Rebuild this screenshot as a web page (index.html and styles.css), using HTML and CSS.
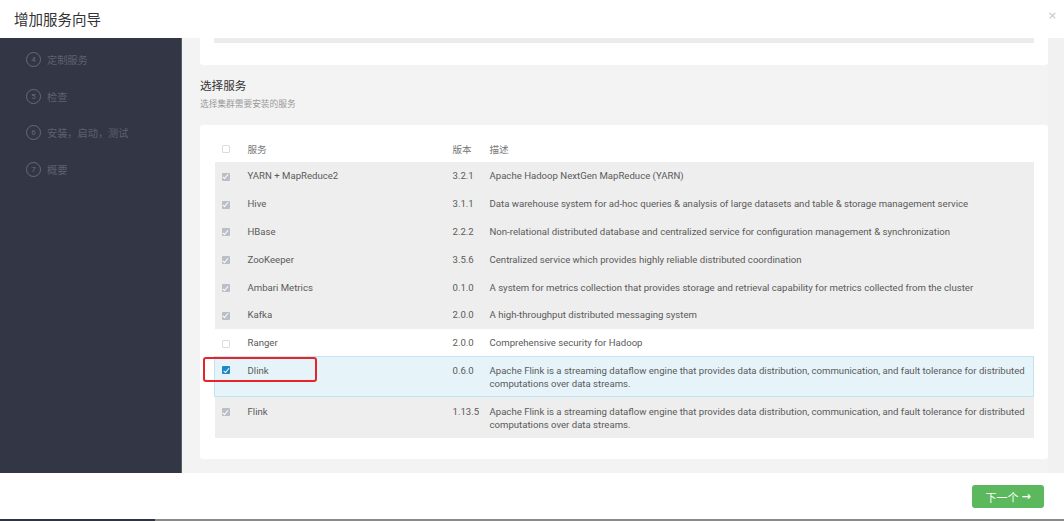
FILE: index.html
```html
<!DOCTYPE html>
<html lang="zh">
<head>
<meta charset="utf-8">
<title>增加服务向导</title>
<link rel="stylesheet" href="styles.css">
</head>
<body>
<div class="modal">
  <div class="modal-header">
    <h1 class="modal-title">增加服务向导</h1>
    <span class="close">×</span>
  </div>
  <div class="modal-body">
    <aside class="sidebar">
      <ul class="steps">
        <li class="step"><span class="num">4</span><span class="label">定制服务</span></li>
        <li class="step"><span class="num">5</span><span class="label">检查</span></li>
        <li class="step"><span class="num">6</span><span class="label">安装，启动，测试</span></li>
        <li class="step"><span class="num">7</span><span class="label">概要</span></li>
      </ul>
    </aside>
    <main class="content">
      <div class="top-card"><div class="top-bar"></div></div>
      <h2 class="section-title">选择服务</h2>
      <p class="section-sub">选择集群需要安装的服务</p>
      <div class="table-card">
        <table class="svc-table">
          <thead>
            <tr>
              <th class="c-cb"><span class="cb"></span></th>
              <th class="c-name">服务</th>
              <th class="c-ver">版本</th>
              <th class="c-desc">描述</th>
            </tr>
          </thead>
          <tbody>
            <tr class="row-dis">
              <td class="c-cb"><span class="cb cb-dis"></span></td>
              <td class="c-name">YARN + MapReduce2</td>
              <td class="c-ver">3.2.1</td>
              <td class="c-desc">Apache Hadoop NextGen MapReduce (YARN)</td>
            </tr>
            <tr class="row-dis">
              <td class="c-cb"><span class="cb cb-dis"></span></td>
              <td class="c-name">Hive</td>
              <td class="c-ver">3.1.1</td>
              <td class="c-desc">Data warehouse system for ad-hoc queries &amp; analysis of large datasets and table &amp; storage management service</td>
            </tr>
            <tr class="row-dis">
              <td class="c-cb"><span class="cb cb-dis"></span></td>
              <td class="c-name">HBase</td>
              <td class="c-ver">2.2.2</td>
              <td class="c-desc">Non-relational distributed database and centralized service for configuration management &amp; synchronization</td>
            </tr>
            <tr class="row-dis">
              <td class="c-cb"><span class="cb cb-dis"></span></td>
              <td class="c-name">ZooKeeper</td>
              <td class="c-ver">3.5.6</td>
              <td class="c-desc">Centralized service which provides highly reliable distributed coordination</td>
            </tr>
            <tr class="row-dis">
              <td class="c-cb"><span class="cb cb-dis"></span></td>
              <td class="c-name">Ambari Metrics</td>
              <td class="c-ver">0.1.0</td>
              <td class="c-desc">A system for metrics collection that provides storage and retrieval capability for metrics collected from the cluster</td>
            </tr>
            <tr class="row-dis">
              <td class="c-cb"><span class="cb cb-dis"></span></td>
              <td class="c-name">Kafka</td>
              <td class="c-ver">2.0.0</td>
              <td class="c-desc">A high-throughput distributed messaging system</td>
            </tr>
            <tr class="row-plain">
              <td class="c-cb"><span class="cb"></span></td>
              <td class="c-name">Ranger</td>
              <td class="c-ver">2.0.0</td>
              <td class="c-desc">Comprehensive security for Hadoop</td>
            </tr>
            <tr class="row-sel">
              <td class="c-cb"><div class="mark-wrap"><span class="cb cb-on"></span><span class="annot"></span></div></td>
              <td class="c-name">Dlink</td>
              <td class="c-ver">0.6.0</td>
              <td class="c-desc">Apache Flink is a streaming dataflow engine that provides data distribution, communication, and fault tolerance for distributed computations over data streams.</td>
            </tr>
            <tr class="row-dis">
              <td class="c-cb"><span class="cb cb-dis"></span></td>
              <td class="c-name">Flink</td>
              <td class="c-ver">1.13.5</td>
              <td class="c-desc">Apache Flink is a streaming dataflow engine that provides data distribution, communication, and fault tolerance for distributed computations over data streams.</td>
            </tr>
          </tbody>
        </table>
      </div>
    </main>
    <div class="scroll-track"></div>
  </div>
  <div class="modal-footer">
    <button class="btn-next"><span>下一个</span><span class="arrow">→</span></button>
  </div>
  <div class="taskbar"><span class="tb-dark"></span><span class="tb-gray"></span></div>
</div>
</body>
</html>
```

FILE: styles.css
```css
* { box-sizing: border-box; }
html, body { margin: 0; padding: 0; }
body {
  width: 1064px;
  height: 521px;
  overflow: hidden;
  background: #fff;
  font-family: Roboto, "Noto Sans CJK SC", sans-serif;
  color: #555;
}
.modal {
  display: flex;
  flex-direction: column;
  width: 1064px;
  height: 521px;
}
.modal-header {
  height: 38px;
  flex: none;
  display: flex;
  align-items: center;
  justify-content: space-between;
  padding: 0 7px 0 14px;
  background: #fff;
}
.modal-title {
  margin: 0;
  font-family: "Noto Sans CJK SC", sans-serif;
  font-weight: 400;
  font-size: 14.5px;
  color: #333;
  position: relative;
  top: -1px;
}
.close {
  font-family: "DejaVu Sans", sans-serif;
  font-size: 11px;
  color: #c4c4c4;
  position: relative;
  top: -4px;
}
.modal-body {
  height: 435px;
  flex: none;
  display: flex;
  background: #f3f3f3;
}
.sidebar {
  width: 182px;
  flex: none;
  background: #333645;
  border-right: 1px solid #5a5c66;
}
.steps {
  list-style: none;
  margin: 0;
  padding: 14px 0 0 26px;
}
.step {
  display: flex;
  align-items: center;
  height: 15px;
  margin-bottom: 21.5px;
}
.num {
  width: 15px;
  height: 15px;
  border: 1px solid #676a76;
  border-radius: 50%;
  display: flex;
  align-items: center;
  justify-content: center;
  font-size: 8px;
  color: #676a76;
  font-family: Roboto, sans-serif;
}
.label {
  margin-left: 6px;
  font-family: "Noto Sans CJK SC", sans-serif;
  font-size: 10.2px;
  color: #5e6170;
}
.content {
  flex: 1;
  overflow: hidden;
  padding: 0 0 0 18px;
}
.scroll-track {
  width: 16px;
  flex: none;
  background: #f1f1f1;
}
.top-card {
  height: 27px;
  background: #fff;
  border-radius: 0 0 3px 3px;
  padding: 0 14px;
}
.top-bar {
  height: 5px;
  background: #ebebeb;
}
.section-title {
  margin: 12px 0 0;
  font-family: "Noto Sans CJK SC", sans-serif;
  font-weight: 400;
  font-size: 11.6px;
  line-height: 16px;
  color: #333;
}
.section-sub {
  margin: 5px 0 0;
  font-family: "Noto Sans CJK SC", sans-serif;
  font-size: 8.7px;
  line-height: 12px;
  color: #999;
}
.table-card {
  margin-top: 15px;
  background: #fff;
  border-radius: 3px;
  padding: 10px 14px 21px;
}
.svc-table {
  width: 100%;
  border-collapse: collapse;
  table-layout: fixed;
  font-size: 9.6px;
}
.svc-table th {
  font-family: "Noto Sans CJK SC", sans-serif;
  font-weight: 400;
  font-size: 9.6px;
  color: #777;
  text-align: left;
  height: 27px;
  padding: 0;
  vertical-align: middle;
}
.svc-table td {
  padding: 7.4px 0;
  line-height: 13px;
  vertical-align: top;
  color: #5a5a5a;
}
.c-cb { width: 33px; padding-left: 7px !important; }
.c-name { width: 205px; }
.c-ver { width: 37px; }
.c-desc { padding-right: 6px !important; }
.row-dis td { background: #eeeeee; }
.row-plain td { background: #fff; }
.row-sel td {
  background: #e6f4fa;
  border-top: 1px solid #bfe4f4;
  border-bottom: 1px solid #bfe4f4;
  padding-top: 6.4px;
  padding-bottom: 6.4px;
}
.row-sel td:first-child { border-left: 1px solid #bfe4f4; }
.row-sel td:last-child { border-right: 1px solid #bfe4f4; }
.cb {
  display: inline-block;
  width: 8px;
  height: 8px;
  border: 1px solid #dcdcdc;
  border-radius: 1px;
  background: #fff;
  position: relative;
  vertical-align: middle;
  top: -1px;
}
.svc-table td .cb { top: 0; }
.cb-dis, .cb-on {
  border: none;
}
.cb-dis { background: #b9bec7; }
.cb-on { background: #1f87c8; }
.cb-dis::after, .cb-on::after {
  content: "";
  position: absolute;
  left: 2.6px;
  top: 0.6px;
  width: 2.2px;
  height: 4.6px;
  border: solid #fff;
  border-width: 0 1.3px 1.3px 0;
  transform: rotate(40deg);
}
.mark-wrap {
  position: relative;
  height: 13px;
  display: flex;
  align-items: center;
}
.annot {
  position: absolute;
  left: -19px;
  top: -7px;
  width: 114px;
  height: 25px;
  border: 2px solid #e8242b;
  border-radius: 3px;
}
.modal-footer {
  height: 46px;
  flex: none;
  display: flex;
  justify-content: flex-end;
  align-items: flex-start;
  padding: 12px 20px 0 0;
  background: #fff;
}
.btn-next {
  width: 72px;
  height: 23px;
  border: none;
  border-radius: 3px;
  background: #5cb85c;
  color: #fff;
  font-family: "Noto Sans CJK SC", sans-serif;
  font-size: 11px;
  padding: 0;
  display: flex;
  align-items: center;
  justify-content: center;
}
.arrow {
  font-family: "DejaVu Sans", sans-serif;
  font-weight: 700;
  margin-left: 3px;
}
.taskbar {
  height: 2px;
  flex: none;
  display: flex;
}
.tb-dark { width: 155px; background: #2e3440; }
.tb-gray { flex: 1; background: #8a8a8a; }
```
